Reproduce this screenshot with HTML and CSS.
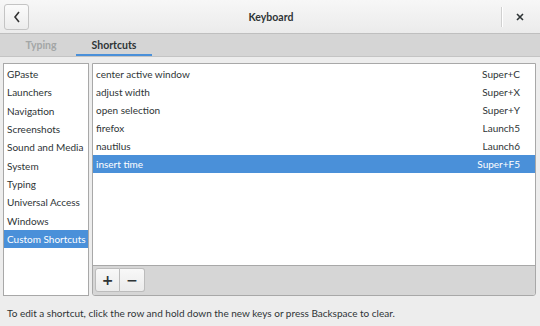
FILE: index.html
```html
<!DOCTYPE html>
<html lang="en">

<head>
    <meta charset="UTF-8">
    <title>Keyboard</title>
    <link rel="stylesheet" href="styles.css">
</head>

<body>
    <div class="vindue">
        <header class="topbar">
            <button class="tilbage">
                <svg width="8" height="12" viewBox="0 0 8 12"><path d="M6 1 L2 6 L6 11" fill="none" stroke="#333" stroke-width="1.6"/></svg>
            </button>
            <div class="titel">Keyboard</div>
            <div class="skille"></div>
            <div class="luk">
                <svg width="8" height="8" viewBox="0 0 8 8"><path d="M1 1 L7 7 M7 1 L1 7" stroke="#2e3436" stroke-width="1.6"/></svg>
            </div>
        </header>

        <nav class="faner">
            <div class="fane">Typing</div>
            <div class="fane aktiv">Shortcuts</div>
        </nav>

        <main class="indhold">
            <ul class="kategorier">
                <li>GPaste</li>
                <li>Launchers</li>
                <li>Navigation</li>
                <li>Screenshots</li>
                <li>Sound and Media</li>
                <li>System</li>
                <li>Typing</li>
                <li>Universal Access</li>
                <li>Windows</li>
                <li class="valgt">Custom Shortcuts</li>
            </ul>

            <section class="genveje">
                <ul class="liste">
                    <li><span>center active window</span><span>Super+C</span></li>
                    <li><span>adjust width</span><span>Super+X</span></li>
                    <li><span>open selection</span><span>Super+Y</span></li>
                    <li><span>firefox</span><span>Launch5</span></li>
                    <li><span>nautilus</span><span>Launch6</span></li>
                    <li class="valgt"><span>insert time</span><span>Super+F5</span></li>
                </ul>
                <div class="vaerktoj">
                    <button class="knap">+</button><button class="knap">&minus;</button>
                </div>
            </section>
        </main>

        <p class="hjaelp">To edit a shortcut, click the row and hold down the new keys or press Backspace to clear.</p>
    </div>
</body>

</html>
```

FILE: styles.css
```css
* {
    box-sizing: border-box;
}

body {
    margin: 0;
    font-family: Lato, "Open Sans", sans-serif;
    font-size: 10px;
    color: #2e3436;
}

ul {
    list-style: none;
    margin: 0;
    padding: 0;
}

.vindue {
    width: 540px;
    height: 326px;
    background-color: #ededed;
}

.topbar {
    height: 34px;
    display: flex;
    align-items: center;
    padding: 0 4px;
    background: linear-gradient(#f7f7f7, #ebebeb);
    border-bottom: 1px solid #bfbfbf;
}

.tilbage {
    width: 25px;
    height: 26px;
    border: 1px solid #c4c4c4;
    border-radius: 3px;
    background: linear-gradient(#fbfbfb, #ececec);
    display: flex;
    align-items: center;
    justify-content: center;
    padding: 0;
}

.titel {
    flex: 1;
    text-align: center;
    font-size: 10.5px;
    font-weight: bold;
    padding-left: 12px;
}

.skille {
    width: 2px;
    height: 20px;
    background-color: #d0d0d0;
    border-right: 1px solid #fff;
}

.luk {
    width: 33px;
    display: flex;
    justify-content: center;
}

.faner {
    height: 23px;
    display: flex;
    padding-left: 6px;
    background-color: #d5d5d5;
    border-bottom: 1px solid #c4c4c4;
}

.fane {
    width: 70px;
    text-align: center;
    line-height: 22px;
    font-size: 10.5px;
    color: #a3a6a6;
    font-weight: bold;
}

.fane.aktiv {
    width: 76px;
    color: #2e3436;
    border-bottom: 2px solid #4a90d9;
}

.indhold {
    display: flex;
    gap: 3px;
    height: 239px;
    padding: 6px 4px 0 3px;
}

.kategorier {
    width: 86px;
    height: 233px;
    background-color: #fff;
    border: 1px solid #a8a8a8;
    padding-top: 1px;
}

.kategorier li {
    height: 18.33px;
    line-height: 18px;
    padding-left: 3px;
    white-space: nowrap;
}

.valgt {
    background-color: #4a90d9;
    color: #fff;
}

.genveje {
    flex: 1;
    height: 233px;
    display: flex;
    flex-direction: column;
    border: 1px solid #a8a8a8;
    border-radius: 0 0 3px 3px;
    overflow: hidden;
}

.liste {
    flex: 1;
    background-color: #fff;
    padding-top: 1px;
}

.liste li {
    height: 18px;
    line-height: 18px;
    display: flex;
    justify-content: space-between;
    padding: 0 15px 0 3px;
}

.vaerktoj {
    height: 30px;
    background-color: #d6d6d6;
    border-top: 1px solid #a8a8a8;
    padding: 2px 0 0 2px;
    display: flex;
}

.knap {
    width: 25px;
    height: 24px;
    padding: 0;
    border: 1px solid #bcbcbc;
    background: linear-gradient(#f8f8f8, #ebebeb);
    font-family: "DejaVu Sans", sans-serif;
    font-size: 14px;
    font-weight: bold;
    color: #2e3436;
}

.knap + .knap {
    border-left: none;
    border-radius: 0 3px 3px 0;
}

.knap:first-child {
    border-radius: 3px 0 0 3px;
}

.hjaelp {
    margin: 0;
    padding: 11px 0 0 7px;
}
```
